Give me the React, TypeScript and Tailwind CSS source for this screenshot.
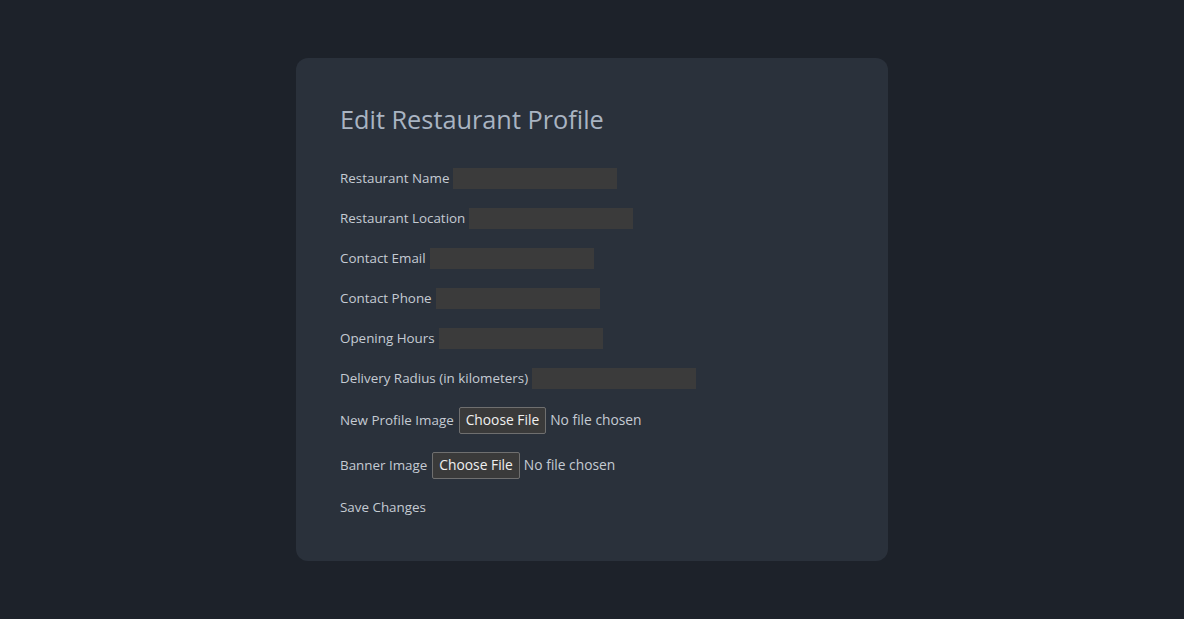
import React from "react";

const fields = [
  "Restaurant Name",
  "Restaurant Location",
  "Contact Email",
  "Contact Phone",
  "Opening Hours",
  "Delivery Radius (in kilometers)",
];

function FileRow({ label }: { label: string }) {
  return (
    <div className="flex items-center h-[27px]">
      <span className="text-[13.4px] text-[#c5cbd3]">{label}</span>
      <span className="ml-[5px] h-[27px] px-[6px] flex items-center border border-[#6f6f6f] bg-[#3a3a3a] rounded-[2px] text-[13.8px] text-[#f0f0f0]">
        Choose File
      </span>
      <span className="ml-[4px] text-[13.8px] text-[#c5cbd3]">No file chosen</span>
    </div>
  );
}

export default function App() {
  return (
    <div
      className="min-h-[619px] w-full bg-[#1d222a] flex justify-center pt-[58px]"
      style={{ fontFamily: '"Open Sans", "Noto Sans", sans-serif' }}
    >
      <div className="w-[592px] h-[503px] bg-[#2a313b] rounded-[12px] px-[44px] pt-[43px]">
        <h1 className="text-[25.3px] leading-[36px] text-[#a9b4c2] mb-[31px]">
          Edit Restaurant Profile
        </h1>
        <div className="flex flex-col">
          {fields.map((f) => (
            <div key={f} className="flex items-center h-[20px] mb-[20px]">
              <span className="text-[13.4px] text-[#c5cbd3]">{f}</span>
              <span className="ml-[4px] w-[164px] h-[21px] bg-[#3b3b3b]" />
            </div>
          ))}
          <div className="-mt-[1px] mb-[18px]">
            <FileRow label="New Profile Image" />
          </div>
          <div className="mb-[18px]">
            <FileRow label="Banner Image" />
          </div>
          <div className="h-[20px] flex items-center text-[13.4px] text-[#c5cbd3]">
            Save Changes
          </div>
        </div>
      </div>
    </div>
  );
}
